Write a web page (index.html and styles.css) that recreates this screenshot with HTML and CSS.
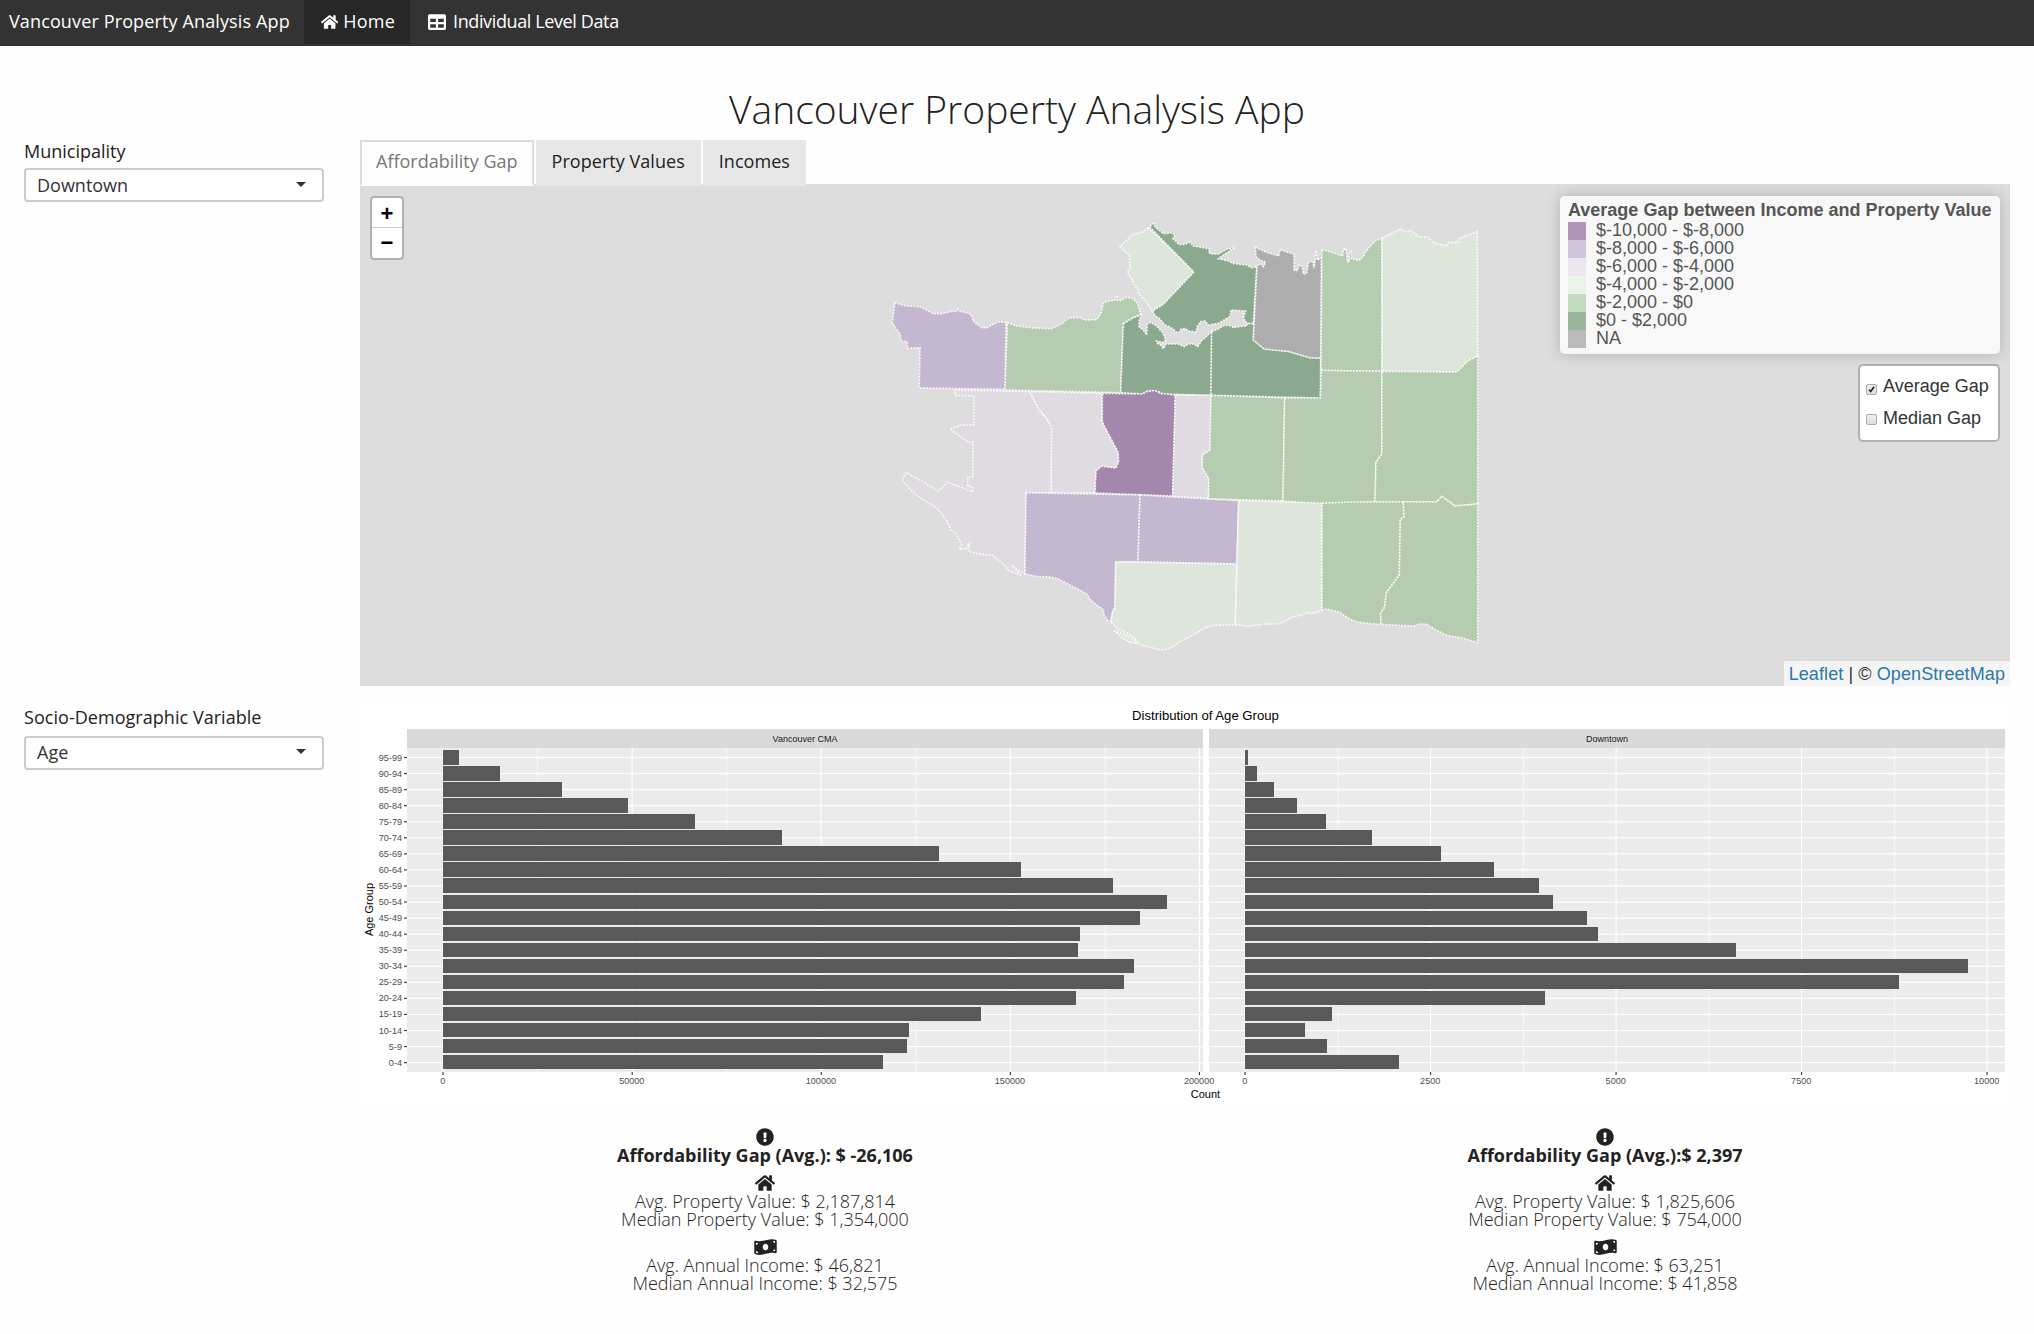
FILE: index.html
```html
<!DOCTYPE html>
<html lang="en">
<head>
<meta charset="utf-8">
<title>Vancouver Property Analysis App</title>
<link rel="stylesheet" href="styles.css">
</head>
<body>
<svg class="defs" width="0" height="0" aria-hidden="true">
  <symbol id="i-home" viewBox="0 0 576 512"><path d="M280.37 148.26L96 300.11V464a16 16 0 0 0 16 16l112.06-.29a16 16 0 0 0 15.92-16V368a16 16 0 0 1 16-16h64a16 16 0 0 1 16 16v95.64a16 16 0 0 0 16 16.05L464 480a16 16 0 0 0 16-16V300L295.67 148.26a12.19 12.19 0 0 0-15.3 0zM571.6 251.47L488 182.56V44.05a12 12 0 0 0-12-12h-56a12 12 0 0 0-12 12v72.61L318.47 43a48 48 0 0 0-61 0L4.34 251.47a12 12 0 0 0-1.6 16.9l25.5 31A12 12 0 0 0 45.15 301l235.22-193.74a12.19 12.19 0 0 1 15.3 0L530.9 301a12 12 0 0 0 16.9-1.6l25.5-31a12 12 0 0 0-1.7-16.93z"/></symbol>
  <symbol id="i-table" viewBox="0 0 512 512"><path d="M464 32H48C21.49 32 0 53.49 0 80v352c0 26.51 21.49 48 48 48h416c26.51 0 48-21.49 48-48V80c0-26.51-21.49-48-48-48zM224 416H64v-96h160v96zm0-160H64v-96h160v96zm224 160H288v-96h160v96zm0-160H288v-96h160v96z"/></symbol>
  <symbol id="i-alert" viewBox="0 0 512 512"><path d="M504 256c0 136.997-111.043 248-248 248S8 392.997 8 256C8 119.083 119.043 8 256 8s248 111.083 248 248zm-248 50c-25.405 0-46 20.595-46 46s20.595 46 46 46 46-20.595 46-46-20.595-46-46-46zm-43.673-165.346l7.418 136c.347 6.364 5.609 11.346 11.982 11.346h48.546c6.373 0 11.635-4.982 11.982-11.346l7.418-136c.375-6.874-5.098-12.654-11.982-12.654h-63.383c-6.884 0-12.356 5.78-11.981 12.654z"/></symbol>
  <symbol id="i-money" viewBox="0 0 640 512"><path d="M621.16 54.46C582.37 38.19 543.55 32 504.75 32c-123.17-.01-246.33 62.34-369.5 62.34-30.89 0-61.76-3.92-92.65-13.72-3.47-1.1-6.95-1.62-10.35-1.62C15.04 79 0 92.32 0 110.81v317.26c0 12.63 7.23 24.6 18.84 29.46C57.63 473.81 96.45 480 135.25 480c123.17 0 246.34-62.35 369.51-62.35 30.89 0 61.76 3.92 92.65 13.72 3.47 1.1 6.95 1.62 10.35 1.62 17.21 0 32.25-13.32 32.25-31.81V83.93c-.01-12.64-7.24-24.6-18.85-29.47zM48 132.22c20.12 5.04 41.12 7.57 62.72 8.93C104.84 170.54 79 192.69 48 192.69v-60.47zm0 285v-47.78c34.37 0 62.18 27.27 63.71 61.4-22.53-1.81-43.59-6.31-63.71-13.62zM320 352c-44.19 0-80-42.99-80-96 0-53.02 35.82-96 80-96s80 42.98 80 96c0 53.03-35.83 96-80 96zm272 27.78c-17.52-4.39-35.71-6.85-54.32-8.44 5.87-26.08 27.5-45.88 54.32-49.28v57.72zm0-236.11c-30.89-3.91-54.86-29.7-55.81-61.55 19.54 2.17 38.09 6.23 55.81 12.85v48.7z"/></symbol>
</svg>

<nav class="navbar">
  <span class="brand">Vancouver Property Analysis App</span>
  <a class="nav-item active"><svg class="ic-home"><use href="#i-home"/></svg><span class="nav-home">Home</span></a>
  <a class="nav-item"><svg class="ic-table"><use href="#i-table"/></svg><span class="nav-data">Individual Level Data</span></a>
</nav>

<h1 class="title"><span>Vancouver Property Analysis App</span></h1>

<main class="layout">
  <aside class="side">
    <label class="label">Municipality</label>
    <div class="select"><span>Downtown</span><i class="caret"></i></div>
  </aside>
  <section class="panel">
    <div class="tabs">
      <a class="tab current">Affordability Gap</a>
      <a class="tab">Property Values</a>
      <a class="tab">Incomes</a>
    </div>
    <div class="map">
      <svg class="regions" viewBox="0 0 1650 500">
        <g transform="translate(510 24) scale(.33333)">
          <path class="c2" d="M75 277L90 283 110 288 135 289 152 291 165 298 190 311 215 311 240 305 258 304 263 296 270 304 285 307 300 312 308 322 308 332 335 353 352 353 370 342 385 336 408 337 405 538 148 534 150 413 112 415 112 395 93 393 90 372 67 340 70 310Z"/>
          <path class="c5" d="M412 338L440 348 480 353 543 356 575 342 590 328 600 323 632 323 642 330 680 329 692 312 700 280 708 275 735 270 740 256 742 270 752 272 765 263 780 263 790 267 803 280 807 295 812 312 785 325 760 341 752 548 405 540Z"/>
          <path class="c4" d="M835 53L820 65 788 74 770 90 750 110 765 125 778 135 780 175 772 188 785 206 795 230 803 235 805 250 828 275 845 301 880 283 972 186Z"/>
          <path class="c6" d="M852 40L838 50 972 186 880 283 848 303 856 318 868 325 885 345 898 350 910 358 920 367 930 365 932 358 945 355 955 363 978 366 982 348 992 335 1005 333 1015 345 1045 340 1062 330 1080 320 1083 300 1127 303 1120 325 1132 341 1150 341 1160 170 1145 173 1130 165 1110 163 1088 160 1075 153 1045 146 1060 135 1095 114 1070 118 1045 132 1022 132 1015 125 1022 118 995 112 970 108 960 96 945 103 928 104 915 92 908 85 913 80 908 67 895 70 880 71 865 58 856 52Z"/>
          <path class="c6" d="M760 341L785 326 814 314 808 330 807 350 820 360 830 375 832 342 842 337 860 348 878 368 887 390 880 397 860 393 862 400 872 405 880 416 888 402 905 402 925 402 943 410 955 402 970 402 983 410 995 392 1025 365 1023 556 880 552 865 545 840 542 828 545 818 552 752 548Z"/>
          <path class="c3" d="M478 545L697 550 697 636 745 728 746 755 738 774 695 769 678 783 675 849 543 849 543 662 525 655 527 645 540 650 535 632 505 595Z"/>
          <path class="c3" d="M255 540L478 545 505 595 538 640 545 655 543 849 468 848 465 1092 440 1078 425 1065 455 1098 440 1092 415 1080 400 1062 385 1052 370 1037 335 1033 297 1025 298 1000 288 1017 267 1016 275 1003 265 985 258 970 243 960 230 930 200 893 157 868 125 842 97 812 108 787 160 816 205 844 220 828 232 817 275 832 308 846 308 832 293 827 293 802 309 800 309 697 292 695 240 657 270 646 312 644 312 558 255 556Z"/>
          <path class="c1" d="M697 550L818 552 828 545 855 541 870 550 916 555 908 858 675 849 678 783 695 769 738 774 746 755 745 728 697 636Z"/>
          <path class="c3" d="M916 555L1023 556 1023 660 1020 720 997 735 997 774 1017 805 1015 866 908 859Z"/>
          <path class="c2" d="M468 848L810 855 804 1055 737 1056 735 1192 728 1205 722 1235 715 1233 702 1215 700 1200 680 1185 660 1168 650 1152 635 1143 605 1128 565 1107 545 1102 500 1099 465 1092Z"/>
          <path class="c2" d="M810 855L1106 872 1100 1062 804 1055Z"/>
          <path class="c4" d="M737 1056L1100 1062 1096 1244 1030 1246 1000 1256 975 1272 930 1295 905 1313 885 1318 870 1320 850 1314 825 1308 800 1300 795 1285 770 1268 745 1258 722 1235 728 1205 735 1192Z"/>
          <path class="c4" d="M732 1262L760 1272 795 1290 797 1300 780 1297 755 1282Z"/>
          <path class="c4" d="M1106 872L1356 877 1356 1200 1335 1210 1308 1209 1300 1214 1265 1222 1245 1234 1220 1242 1180 1242 1135 1250 1096 1244Z"/>
        </g>
        <g transform="translate(770 24) scale(.33333)">
          <path class="c6" d="M245 365L265 357 285 345 305 348 310 353 325 350 350 348 352 341 372 341 370 390 403 417 475 424 540 443 572 444 571 564 243 556Z"/>
          <path class="na" d="M376 112L410 127 446 138 450 119 492 133 492 180 502 182 508 165 517 170 520 192 530 190 536 158 548 152 552 175 556 148 558 122 562 150 574 145 572 444 540 443 475 424 403 417 370 390 381 170 390 160 400 170 407 157 390 150 378 140Z"/>
          <path class="c5" d="M576 118L605 127 638 138 640 118 648 116 652 155 658 155 658 125 664 125 665 145 685 152 700 140 705 128 730 98 735 92 756 85 756 484 573 481Z"/>
          <path class="c4" d="M756 85L785 70 812 57 822 65 845 62 865 80 895 82 910 98 935 103 948 108 955 98 982 98 988 85 1010 77 1042 65 1043 438 1015 452 980 486 756 484Z"/>
          <path class="c5" d="M243 556L464 564 459 873 236 866 236 805 217 774 217 735 240 720Z"/>
          <path class="c5" d="M464 564L571 564 574 481 756 484 756 732 738 757 735 876 580 880 459 874Z"/>
          <path class="c5" d="M756 484L980 486 1015 452 1043 438 1043 882 975 888 935 859 920 876 735 876 738 757 756 732Z"/>
          <path class="c5" d="M576 880L660 876 820 876 822 922 811 928 808 1095 768 1150 765 1190 752 1210 753 1243 720 1241 680 1236 655 1225 630 1207 590 1197 576 1200Z"/>
          <path class="c5" d="M820 876L920 876 935 859 975 888 1043 882 1043 1298 1000 1285 950 1276 915 1258 890 1243 870 1242 850 1248 753 1243 752 1210 765 1190 768 1150 808 1095 811 928 822 922Z"/>
        </g>
      </svg>
      <div class="zoom"><a>+</a><a>−</a></div>
      <div class="controls">
        <div class="legend">
          <strong>Average Gap between Income and Property Value</strong>
          <div><i class="s1"></i><span>$-10,000 - $-8,000</span></div>
          <div><i class="s2"></i><span>$-8,000 - $-6,000</span></div>
          <div><i class="s3"></i><span>$-6,000 - $-4,000</span></div>
          <div><i class="s4"></i><span>$-4,000 - $-2,000</span></div>
          <div><i class="s5"></i><span>$-2,000 - $0</span></div>
          <div><i class="s6"></i><span>$0 - $2,000</span></div>
          <div><i class="s7"></i><span>NA</span></div>
        </div>
        <div class="layers">
          <label><i class="check"><svg viewBox="0 0 11 11"><path d="M2.6 5.8L4.6 8 8.6 2.2"/></svg></i>Average Gap</label>
          <label><i class="check"></i>Median Gap</label>
        </div>
      </div>
      <div class="attribution"><a>Leaflet</a> | © <a>OpenStreetMap</a></div>
    </div>
  </section>

  <aside class="side side-demo">
    <label class="label">Socio-Demographic Variable</label>
    <div class="select"><span>Age</span><i class="caret"></i></div>
  </aside>
  <section class="panel">
    <svg class="chart" id="chart" viewBox="360 700 1650 404"></svg>
  </section>
</main>

<footer class="stats">
  <div class="stat">
    <p class="gap"><svg class="ic-alert"><use href="#i-alert"/></svg><span>Affordability Gap (Avg.): $ -26,106</span></p>
    <p><svg class="ic-house"><use href="#i-home"/></svg><span>Avg. Property Value: $ 2,187,814</span><span>Median Property Value: $ 1,354,000</span></p>
    <p><svg class="ic-money"><use href="#i-money"/></svg><span>Avg. Annual Income: $ 46,821</span><span>Median Annual Income: $ 32,575</span></p>
  </div>
  <div class="stat">
    <p class="gap"><svg class="ic-alert"><use href="#i-alert"/></svg><span>Affordability Gap (Avg.):$ 2,397</span></p>
    <p><svg class="ic-house"><use href="#i-home"/></svg><span>Avg. Property Value: $ 1,825,606</span><span>Median Property Value: $ 754,000</span></p>
    <p><svg class="ic-money"><use href="#i-money"/></svg><span>Avg. Annual Income: $ 63,251</span><span>Median Annual Income: $ 41,858</span></p>
  </div>
</footer>
<script src="chart.js"></script>
</body>
</html>
```
FILE: styles.css
```css
* { box-sizing: border-box; }
body { margin: 0; background: #fefefe; color: #222; font: 18px/18px "Open Sans", sans-serif; }
.defs { position: absolute; }
svg { fill: currentColor; }

.navbar { display: flex; height: 46px; background: #333; color: #fff; line-height: 42px; font-size: 18px; }
.brand { width: 304px; padding-left: 9px; white-space: nowrap; letter-spacing: .13px; }
.nav-item { display: flex; align-items: center; height: 44px; padding: 0 15px 0 17px; white-space: nowrap; }
.nav-item span { height: 44px; }
.nav-home { letter-spacing: .2px; }
.nav-data { letter-spacing: -.38px; }
.nav-item.active { width: 106px; background: #272727; }
.ic-home { width: 20px; height: 18px; margin: -1px 5px 0 0; }
.ic-table { width: 18px; height: 18px; margin: -1px 7px 0 1px; }

.title { margin: 32px 0 0; height: 62px; line-height: 62px; font-size: 39px; font-weight: 300; text-align: center; }

.layout { display: grid; grid-template-columns: 360px 1650px; }
.side { padding: 2px 36px 0 24px; }
.side-demo { padding-top: 22px; }
.label { display: block; margin-bottom: 8px; }
.side-demo .label { margin-bottom: 10px; letter-spacing: .04px; }
.select { display: flex; align-items: center; justify-content: space-between; height: 34px; padding: 0 16px 0 11px; border: 2px solid #ccc; border-radius: 4px; background: #fff; color: #333; }
.side-demo .select { padding-bottom: 2px; }
.caret { border: 5px solid transparent; border-top-color: #333; border-bottom: 0; margin-top: -1px; }

.tabs { position: relative; z-index: 1; display: flex; gap: 2px; height: 46px; margin-bottom: -2px; }
.tab { padding: 0 14px; border: 2px solid #e7e7e7; background: #e7e7e7; line-height: 38px; white-space: nowrap; letter-spacing: .04px; }
.tab.current { border-color: #ddd; border-bottom-color: #fefefe; background: #fefefe; color: #777; letter-spacing: 0; }
.panel { min-width: 0; }
.map { position: relative; height: 502px; border-top: 2px solid #ddd; background: #ddd; font-family: "Liberation Sans", Arial, sans-serif; }
.regions { display: block; width: 1650px; height: 500px; }
.regions path { stroke: #fff; stroke-width: 4.8; stroke-opacity: .9; stroke-dasharray: 5.5 4; }
.c1 { fill: #a487ac; }
.c2 { fill: #c4b7d0; }
.c3 { fill: #e0dae1; }
.c4 { fill: #dee6dc; }
.c5 { fill: #b5ccb0; }
.c6 { fill: #8ba98e; }
.na { fill: #adadad; }

.zoom { position: absolute; left: 10px; top: 10px; width: 34px; border: 2px solid rgba(0,0,0,.2); border-radius: 4px; background: #fff; background-clip: padding-box; }
.zoom a { display: block; height: 30px; font: bold 22px/30px "Liberation Sans", Arial, sans-serif; text-align: center; color: #000; }
.zoom a:first-child { height: 30px; line-height: 32px; border-bottom: 1px solid #ccc; }

.controls { position: absolute; right: 10px; top: 10px; display: flex; flex-direction: column; align-items: flex-end; gap: 10px; }
.legend { width: 440px; height: 158px; padding: 6px 8px; border-radius: 5px; background: rgba(255,255,255,.8); box-shadow: 0 0 15px rgba(0,0,0,.2); color: #555; white-space: nowrap; }
.legend strong { display: block; height: 20px; line-height: 16px; }
.legend div { display: flex; height: 18px; }
.legend span { line-height: 16px; }
.legend i { width: 18px; height: 18px; margin-right: 10px; }
.s1 { background: #b295bb; }
.s2 { background: #d1c4dd; }
.s3 { background: #ece6ee; }
.s4 { background: #eaf3e8; }
.s5 { background: #c2dbbd; }
.s6 { background: #99b69c; }
.s7 { background: #bbb; }
.layers { width: 142px; height: 78px; padding: 6px; border: 2px solid rgba(0,0,0,.2); border-radius: 5px; background: #fff; background-clip: padding-box; color: #333; }
.layers label { display: flex; align-items: center; height: 32px; margin-top: -2px; line-height: 28px; white-space: nowrap; }
.layers label + label { margin-top: 0; }
.check { width: 11px; height: 11px; margin: 7px 6px 0 0; border: 1px solid #aaa; border-radius: 2px; background: linear-gradient(#eee, #ddd); }
.layers label + label .check { margin-top: 2px; }
.check svg { display: block; width: 9px; height: 9px; fill: none; stroke: #222; stroke-width: 2; }
.attribution { position: absolute; right: 0; bottom: 0; height: 25px; padding: 0 5px; background: rgba(255,255,255,.7); color: #333; line-height: 26px; letter-spacing: .09px; white-space: nowrap; }
.attribution a { color: #2a78a8; }

.chart { display: block; width: 1650px; height: 404px; margin-top: 14px; font-family: "Liberation Sans", Arial, sans-serif; }

.stats { display: grid; grid-template-columns: 840px 840px; padding-left: 345px; margin-top: 24px; }
.stat p { display: flex; flex-direction: column; align-items: center; margin: 0 0 10px; font-weight: 300; }
.stat .gap { font-weight: 700; }
.stat span { line-height: 18px; height: 18px; white-space: nowrap; }
.ic-alert, .ic-house, .ic-money { height: 18px; }
.ic-alert { width: 18px; }
.ic-house { width: 20px; }
.ic-money { width: 23px; }
```
FILE: chart.js
```js
const ages = ['95-99', '90-94', '85-89', '80-84', '75-79', '70-74', '65-69', '60-64', '55-59', '50-54',
  '45-49', '40-44', '35-39', '30-34', '25-29', '20-24', '15-19', '10-14', '5-9', '0-4'];

// Bar ends are given on the drawing's own x scale.
const panels = [
  { name: 'Vancouver CMA', x0: 407, x1: 1203, zero: 443, step: 189.1, ticks: [0, 50000, 100000, 150000, 200000],
    ends: [459, 500, 562, 628, 695, 782, 939, 1021, 1113, 1167, 1140, 1080, 1078, 1134, 1124, 1076, 981, 909, 907, 883] },
  { name: 'Downtown', x0: 1209, x1: 2005, zero: 1245, step: 185.5, ticks: [0, 2500, 5000, 7500, 10000],
    ends: [1248, 1257, 1274, 1297, 1326, 1372, 1441, 1494, 1539, 1553, 1587, 1598, 1736, 1968, 1899, 1545, 1332, 1305, 1327, 1399] }
];

const out = [];
const rect = (x, y, w, h, fill) => out.push(`<rect x="${x}" y="${y}" width="${w}" height="${h}" fill="${fill}"/>`);
const text = (x, y, size, fill, anchor, str, extra = '') =>
  out.push(`<text x="${x}" y="${y}" font-size="${size}" fill="${fill}" text-anchor="${anchor}" ${extra}>${str}</text>`);
const rowY = i => 757.5 + i * 16.06;

rect(360, 704, 1650, 400, '#fff');
text(1205.5, 720, 13.15, '#000', 'middle', 'Distribution of Age Group');

for (const p of panels) {
  const w = p.x1 - p.x0;
  rect(p.x0, 729, w, 19, '#d9d9d9');
  rect(p.x0, 748, w, 324, '#ebebeb');
  for (let k = 0; k < 4; k++) rect(p.zero - 0.1 + (k + 0.5) * p.step, 748, 0.6, 324, '#fff');
  ages.forEach((_, i) => rect(p.x0, rowY(i) - 0.6, w, 1.2, '#fff'));
  p.ticks.forEach((t, k) => {
    const x = p.zero + k * p.step;
    rect(x - 0.5, 748, 1.1, 324, '#fff');
    rect(x - 0.5, 1072, 1.1, 3, '#333');
    text(x - 0.3, 1083.7, 9.1, '#4d4d4d', 'middle', t);
  });
  p.ends.forEach((end, i) => {
    const late = i > 8;
    rect(p.zero, 750 + 16 * i + (late ? 1 : 0), end - p.zero, late ? 14 : 15, '#595959');
  });
  text((p.x0 + p.x1) / 2, 741.5, 9, '#1a1a1a', 'middle', p.name);
}

ages.forEach((age, i) => {
  rect(404, rowY(i) - 0.55, 3, 1.1, '#333');
  text(402, rowY(i) + 3, 9.1, '#4d4d4d', 'end', age);
});
text(1205.5, 1097.5, 11, '#000', 'middle', 'Count');
text(0, 0, 11, '#000', 'middle', 'Age Group', 'transform="translate(373 909.5) rotate(-90)"');

document.getElementById('chart').innerHTML = out.join('');
```
